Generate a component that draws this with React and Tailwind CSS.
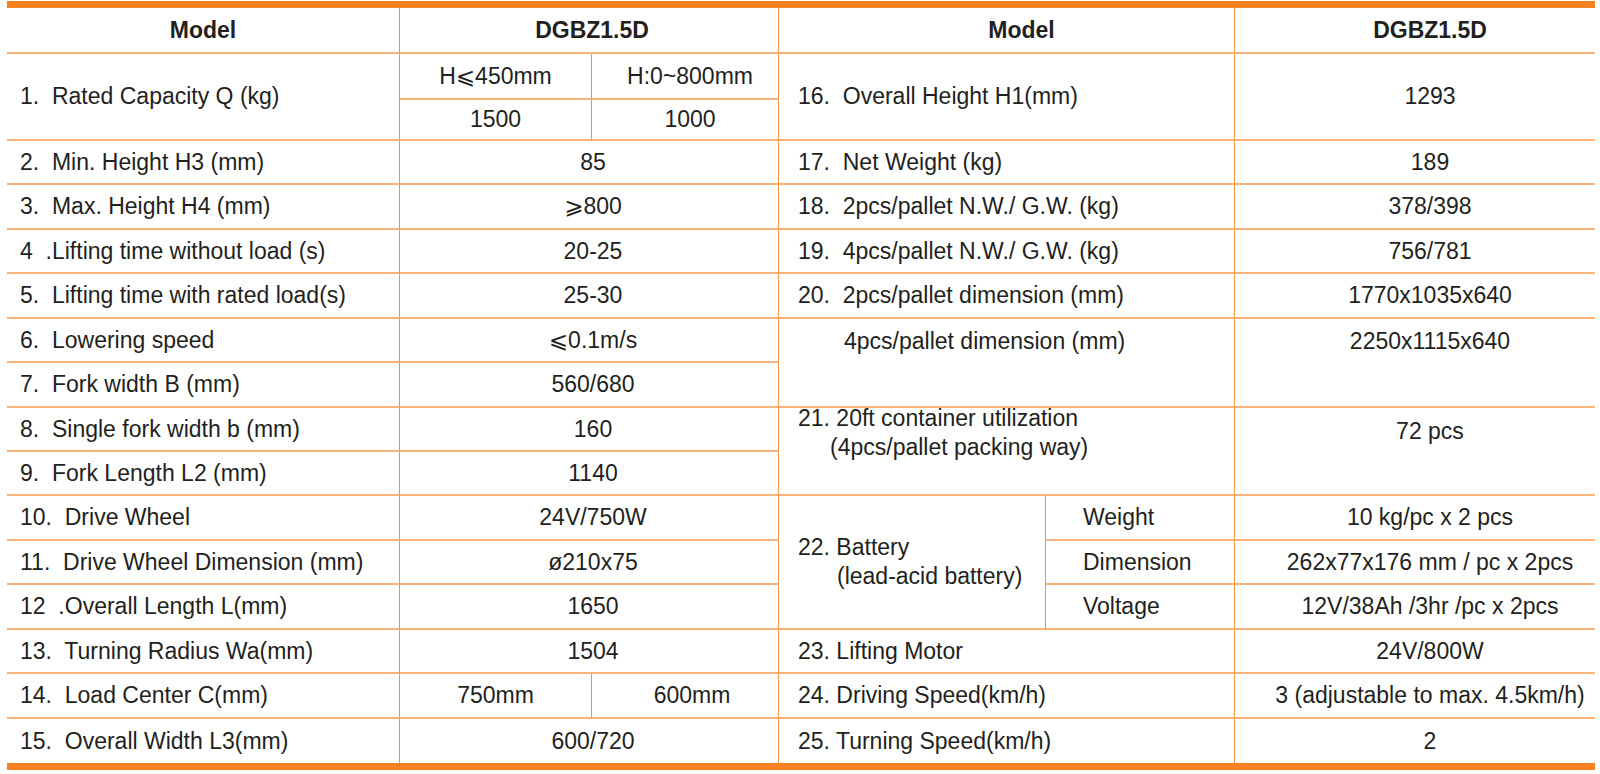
import React from "react";

const cells = [
  // header
  { pos: "col-start-1 row-start-1", b: true, r: true, align: "justify-center font-bold", text: "Model" },
  { pos: "col-start-2 col-span-2 row-start-1", b: true, r: true, align: "justify-center font-bold pl-[6px]", text: "DGBZ1.5D" },
  { pos: "col-start-4 col-span-2 row-start-1", b: true, r: true, align: "justify-center font-bold pl-[30px]", text: "Model" },
  { pos: "col-start-6 row-start-1", b: true, r: false, align: "justify-center font-bold pl-[30px]", text: "DGBZ1.5D" },

  // row 1
  { pos: "col-start-1 row-start-2 row-span-2", b: true, r: true, align: "justify-start pl-[13px]", text: "1.  Rated Capacity Q (kg)" },
  { pos: "col-start-2 row-start-2", b: true, r: true, align: "justify-center", text: "H⩽450mm" },
  { pos: "col-start-3 row-start-2", b: true, r: true, align: "justify-center pl-[10px]", text: "H:0~800mm" },
  { pos: "col-start-2 row-start-3", b: true, r: true, align: "justify-center", text: "1500" },
  { pos: "col-start-3 row-start-3", b: true, r: true, align: "justify-center pl-[10px]", text: "1000" },

  // rows 2-15 left
  { pos: "col-start-1 row-start-4", b: true, r: true, align: "justify-start pl-[13px]", text: "2.  Min. Height H3 (mm)" },
  { pos: "col-start-2 col-span-2 row-start-4", b: true, r: true, align: "justify-center pl-[8px]", text: "85" },
  { pos: "col-start-1 row-start-5", b: true, r: true, align: "justify-start pl-[13px]", text: "3.  Max. Height H4 (mm)" },
  { pos: "col-start-2 col-span-2 row-start-5", b: true, r: true, align: "justify-center pl-[8px]", text: "⩾800" },
  { pos: "col-start-1 row-start-6", b: true, r: true, align: "justify-start pl-[13px]", text: "4  .Lifting time without load (s)" },
  { pos: "col-start-2 col-span-2 row-start-6", b: true, r: true, align: "justify-center pl-[8px]", text: "20-25" },
  { pos: "col-start-1 row-start-7", b: true, r: true, align: "justify-start pl-[13px]", text: "5.  Lifting time with rated load(s)" },
  { pos: "col-start-2 col-span-2 row-start-7", b: true, r: true, align: "justify-center pl-[8px]", text: "25-30" },
  { pos: "col-start-1 row-start-8", b: true, r: true, align: "justify-start pl-[13px]", text: "6.  Lowering speed" },
  { pos: "col-start-2 col-span-2 row-start-8", b: true, r: true, align: "justify-center pl-[8px]", text: "⩽0.1m/s" },
  { pos: "col-start-1 row-start-9", b: true, r: true, align: "justify-start pl-[13px]", text: "7.  Fork width B (mm)" },
  { pos: "col-start-2 col-span-2 row-start-9", b: true, r: true, align: "justify-center pl-[8px]", text: "560/680" },
  { pos: "col-start-1 row-start-10", b: true, r: true, align: "justify-start pl-[13px]", text: "8.  Single fork width b (mm)" },
  { pos: "col-start-2 col-span-2 row-start-10", b: true, r: true, align: "justify-center pl-[8px]", text: "160" },
  { pos: "col-start-1 row-start-11", b: true, r: true, align: "justify-start pl-[13px]", text: "9.  Fork Length L2 (mm)" },
  { pos: "col-start-2 col-span-2 row-start-11", b: true, r: true, align: "justify-center pl-[8px]", text: "1140" },
  { pos: "col-start-1 row-start-12", b: true, r: true, align: "justify-start pl-[13px]", text: "10.  Drive Wheel" },
  { pos: "col-start-2 col-span-2 row-start-12", b: true, r: true, align: "justify-center pl-[8px]", text: "24V/750W" },
  { pos: "col-start-1 row-start-13", b: true, r: true, align: "justify-start pl-[13px]", text: "11.  Drive Wheel Dimension (mm)" },
  { pos: "col-start-2 col-span-2 row-start-13", b: true, r: true, align: "justify-center pl-[8px]", text: "ø210x75" },
  { pos: "col-start-1 row-start-14", b: true, r: true, align: "justify-start pl-[13px]", text: "12  .Overall Length L(mm)" },
  { pos: "col-start-2 col-span-2 row-start-14", b: true, r: true, align: "justify-center pl-[8px]", text: "1650" },
  { pos: "col-start-1 row-start-15", b: true, r: true, align: "justify-start pl-[13px]", text: "13.  Turning Radius Wa(mm)" },
  { pos: "col-start-2 col-span-2 row-start-15", b: true, r: true, align: "justify-center pl-[8px]", text: "1504" },
  { pos: "col-start-1 row-start-16", b: true, r: true, align: "justify-start pl-[13px]", text: "14.  Load Center C(mm)" },
  { pos: "col-start-2 row-start-16", b: true, r: true, align: "justify-center", text: "750mm" },
  { pos: "col-start-3 row-start-16", b: true, r: true, align: "justify-center pl-[14px]", text: "600mm" },
  { pos: "col-start-1 row-start-17", b: false, r: true, align: "justify-start pl-[13px]", text: "15.  Overall Width L3(mm)" },
  { pos: "col-start-2 col-span-2 row-start-17", b: false, r: true, align: "justify-center pl-[8px]", text: "600/720" },

  // right side
  { pos: "col-start-4 col-span-2 row-start-2 row-span-2", b: true, r: true, align: "justify-start pl-[19px]", text: "16.  Overall Height H1(mm)" },
  { pos: "col-start-6 row-start-2 row-span-2", b: true, r: false, align: "justify-center pl-[30px]", text: "1293" },
  { pos: "col-start-4 col-span-2 row-start-4", b: true, r: true, align: "justify-start pl-[19px]", text: "17.  Net Weight (kg)" },
  { pos: "col-start-6 row-start-4", b: true, r: false, align: "justify-center pl-[30px]", text: "189" },
  { pos: "col-start-4 col-span-2 row-start-5", b: true, r: true, align: "justify-start pl-[19px]", text: "18.  2pcs/pallet N.W./ G.W. (kg)" },
  { pos: "col-start-6 row-start-5", b: true, r: false, align: "justify-center pl-[30px]", text: "378/398" },
  { pos: "col-start-4 col-span-2 row-start-6", b: true, r: true, align: "justify-start pl-[19px]", text: "19.  4pcs/pallet N.W./ G.W. (kg)" },
  { pos: "col-start-6 row-start-6", b: true, r: false, align: "justify-center pl-[30px]", text: "756/781" },
  { pos: "col-start-4 col-span-2 row-start-7", b: true, r: true, align: "justify-start pl-[19px]", text: "20.  2pcs/pallet dimension (mm)" },
  { pos: "col-start-6 row-start-7", b: true, r: false, align: "justify-center pl-[30px]", text: "1770x1035x640" },
];

function Cell({ pos, b, r, align, children }) {
  return (
    <div
      className={
        pos +
        " flex items-center whitespace-pre " +
        align +
        (b ? " border-b-2 border-b-[#f9b47c]" : "") +
        (r ? " border-r border-r-[#f5923e]" : "")
      }
    >
      {children}
    </div>
  );
}

export default function App() {
  return (
    <div className="w-[1600px] h-[774px] bg-white overflow-hidden">
      <div
        className="ml-[7px] mt-[1px] w-[1588px] text-[23px] leading-none text-[#231f20]"
        style={{ fontFamily: '"Liberation Sans", Arial, "DejaVu Sans", sans-serif' }}
      >
        <div className="h-[7px] bg-[#f5821f]" />
        <div className="grid grid-cols-[393px_192px_187px_267px_189px_360px] grid-rows-[46px_46px_41px_44px_45px_44px_45px_44px_45px_44px_44px_45px_44px_45px_44px_45px_44px]">
          {cells.map((c, i) => (
            <Cell key={i} pos={c.pos} b={c.b} r={c.r} align={c.align}>
              {c.text}
            </Cell>
          ))}

          {/* 4pcs/pallet dimension */}
          <div className="col-start-4 col-span-2 row-start-8 row-span-2 flex items-start border-b-2 border-b-[#f9b47c] border-r border-r-[#f5923e]">
            <div className="h-[44px] flex items-center pl-[65px] whitespace-pre">4pcs/pallet dimension (mm)</div>
          </div>
          <div className="col-start-6 row-start-8 row-span-2 flex items-start justify-center pl-[30px] border-b-2 border-b-[#f9b47c]">
            <div className="h-[44px] flex items-center">2250x1115x640</div>
          </div>

          {/* 21 container */}
          <div className="col-start-4 col-span-2 row-start-10 row-span-2 flex flex-col pl-[19px] pt-[1px] leading-[29px] whitespace-pre border-b-2 border-b-[#f9b47c] border-r border-r-[#f5923e]">
            <span className="-mt-[5px]">21. 20ft container utilization</span>
            <span className="pl-[32px]">(4pcs/pallet packing way)</span>
          </div>
          <div className="col-start-6 row-start-10 row-span-2 flex items-start justify-center pl-[30px] border-b-2 border-b-[#f9b47c]">
            <div className="h-[46px] flex items-center">72 pcs</div>
          </div>

          {/* 22 battery */}
          <div className="col-start-4 row-start-12 row-span-3 flex flex-col justify-center pl-[19px] leading-[29px] whitespace-pre border-b-2 border-b-[#f9b47c] border-r border-r-[#f5923e]">
            <span>22. Battery</span>
            <span className="pl-[39px]">(lead-acid battery)</span>
          </div>
          <div className="col-start-5 row-start-12 flex items-center pl-[37px] border-b-2 border-b-[#f9b47c] border-r border-r-[#f5923e]">Weight</div>
          <div className="col-start-6 row-start-12 flex items-center justify-center pl-[30px] border-b-2 border-b-[#f9b47c]">10 kg/pc x 2 pcs</div>
          <div className="col-start-5 row-start-13 flex items-center pl-[37px] border-b-2 border-b-[#f9b47c] border-r border-r-[#f5923e]">Dimension</div>
          <div className="col-start-6 row-start-13 flex items-center justify-center pl-[30px] border-b-2 border-b-[#f9b47c] whitespace-nowrap">262x77x176 mm / pc x 2pcs</div>
          <div className="col-start-5 row-start-14 flex items-center pl-[37px] border-b-2 border-b-[#f9b47c] border-r border-r-[#f5923e]">Voltage</div>
          <div className="col-start-6 row-start-14 flex items-center justify-center pl-[30px] border-b-2 border-b-[#f9b47c] whitespace-nowrap">12V/38Ah /3hr /pc x 2pcs</div>

          {/* 23-25 */}
          <div className="col-start-4 col-span-2 row-start-15 flex items-center pl-[19px] border-b-2 border-b-[#f9b47c] border-r border-r-[#f5923e]">23. Lifting Motor</div>
          <div className="col-start-6 row-start-15 flex items-center justify-center pl-[30px] border-b-2 border-b-[#f9b47c]">24V/800W</div>
          <div className="col-start-4 col-span-2 row-start-16 flex items-center pl-[19px] border-b-2 border-b-[#f9b47c] border-r border-r-[#f5923e]">24. Driving Speed(km/h)</div>
          <div className="col-start-6 row-start-16 flex items-center justify-center pl-[30px] border-b-2 border-b-[#f9b47c] whitespace-nowrap">3 (adjustable to max. 4.5km/h)</div>
          <div className="col-start-4 col-span-2 row-start-17 flex items-center pl-[19px] border-r border-r-[#f5923e]">25. Turning Speed(km/h)</div>
          <div className="col-start-6 row-start-17 flex items-center justify-center pl-[30px]">2</div>
        </div>
        <div className="h-[7px] bg-[#f5821f]" />
      </div>
    </div>
  );
}
